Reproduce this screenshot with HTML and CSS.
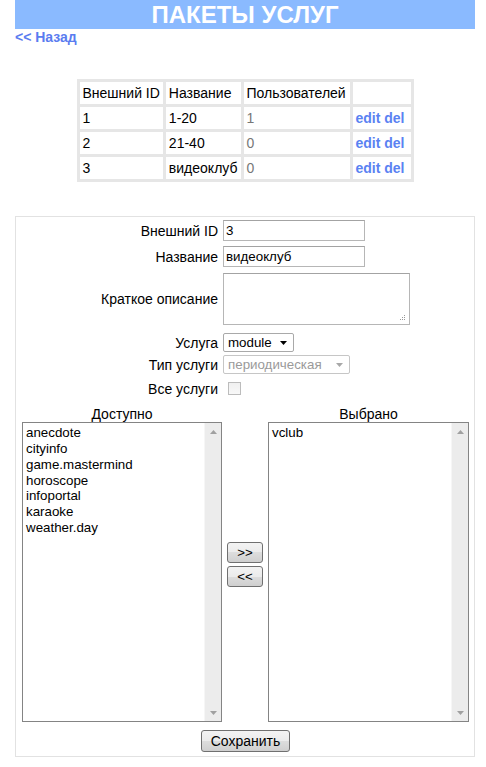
FILE: index.html
```html
<!DOCTYPE html>
<html lang="ru">
<head>
<meta charset="utf-8">
<title>Пакеты услуг</title>
<link rel="stylesheet" href="styles.css">
</head>
<body>
<div class="page">
  <h1 class="title">ПАКЕТЫ УСЛУГ</h1>
  <a class="back" href="#">&lt;&lt; Назад</a>

  <table class="packages">
    <thead>
      <tr><th class="c-id">Внешний ID</th><th class="c-name">Название</th><th class="c-users">Пользователей</th><th class="c-act"></th></tr>
    </thead>
    <tbody>
      <tr><td>1</td><td>1-20</td><td class="num">1</td><td class="act"><a href="#">edit</a> <a href="#">del</a></td></tr>
      <tr><td>2</td><td>21-40</td><td class="num">0</td><td class="act"><a href="#">edit</a> <a href="#">del</a></td></tr>
      <tr><td>3</td><td>видеоклуб</td><td class="num">0</td><td class="act"><a href="#">edit</a> <a href="#">del</a></td></tr>
    </tbody>
  </table>

  <form class="form-box" onsubmit="return false">
    <div class="row r-id">
      <label class="lbl" for="ext">Внешний ID</label>
      <input class="text" id="ext" type="text" value="3">
    </div>
    <div class="row r-name">
      <label class="lbl" for="nm">Название</label>
      <input class="text" id="nm" type="text" value="видеоклуб">
    </div>
    <div class="row r-desc">
      <label class="lbl" for="ds">Краткое описание</label>
      <div class="area-wrap">
        <textarea class="area" id="ds"></textarea>
        <svg class="grip" width="6" height="6" viewBox="0 0 6 6"><rect x="4" y="0" width="1" height="1" fill="#9a9a9a"/><rect x="2" y="2" width="1" height="1" fill="#9a9a9a"/><rect x="4" y="2" width="1" height="1" fill="#9a9a9a"/><rect x="0" y="4" width="1" height="1" fill="#9a9a9a"/><rect x="2" y="4" width="1" height="1" fill="#9a9a9a"/><rect x="4" y="4" width="1" height="1" fill="#9a9a9a"/></svg>
      </div>
    </div>
    <div class="row r-svc">
      <span class="lbl">Услуга</span>
      <div class="select sel-module"><span>module</span><svg width="7" height="4" viewBox="0 0 7 4"><path d="M0 0H7L3.5 4Z" fill="#000"/></svg></div>
    </div>
    <div class="row r-type">
      <span class="lbl">Тип услуги</span>
      <div class="select sel-type disabled"><span>периодическая</span><svg width="7" height="4" viewBox="0 0 7 4"><path d="M0 0H7L3.5 4Z" fill="#a8a8a8"/></svg></div>
    </div>
    <div class="row r-check">
      <span class="lbl">Все услуги</span>
      <span class="check"></span>
    </div>

    <div class="lists-head">
      <span>Доступно</span><span></span><span>Выбрано</span>
    </div>
    <div class="lists">
      <div class="listbox">
        <div class="options">
          <div>anecdote</div>
          <div>cityinfo</div>
          <div>game.mastermind</div>
          <div>horoscope</div>
          <div>infoportal</div>
          <div>karaoke</div>
          <div>weather.day</div>
        </div>
        <div class="scrollbar">
          <span class="sb-btn"><svg width="7" height="4" viewBox="0 0 7 4"><path d="M0 4H7L3.5 0Z" fill="#a0a0a0"/></svg></span>
          <span class="sb-btn"><svg width="7" height="4" viewBox="0 0 7 4"><path d="M0 0H7L3.5 4Z" fill="#a0a0a0"/></svg></span>
        </div>
      </div>
      <div class="movers">
        <button class="btn mv" type="button">&gt;&gt;</button>
        <button class="btn mv" type="button">&lt;&lt;</button>
      </div>
      <div class="listbox">
        <div class="options">
          <div>vclub</div>
        </div>
        <div class="scrollbar">
          <span class="sb-btn"><svg width="7" height="4" viewBox="0 0 7 4"><path d="M0 4H7L3.5 0Z" fill="#a0a0a0"/></svg></span>
          <span class="sb-btn"><svg width="7" height="4" viewBox="0 0 7 4"><path d="M0 0H7L3.5 4Z" fill="#a0a0a0"/></svg></span>
        </div>
      </div>
    </div>
    <div class="save-row">
      <button class="btn save" type="submit">Сохранить</button>
    </div>
  </form>
</div>
</body>
</html>
```

FILE: styles.css
```css
* { box-sizing: border-box; }

body {
  margin: 0;
  font-family: "Liberation Sans", Arial, sans-serif;
  font-size: 14px;
  color: #000;
  background: #fff;
}

.page {
  width: 460px;
  margin-left: 15px;
}

.title {
  margin: 0;
  height: 29px;
  line-height: 30px;
  background: #8abaff;
  color: #fff;
  font-size: 24px;
  font-weight: bold;
  text-align: center;
}

.back {
  display: block;
  width: max-content;
  font-weight: bold;
  font-size: 14px;
  line-height: 17px;
  color: #5a7cf0;
  text-decoration: none;
}

/* table */
.packages {
  margin: 33px auto 0;
  border-collapse: collapse;
  border: 3px solid #e6e6e6;
}
.packages th,
.packages td {
  box-sizing: content-box;
  border: 3px solid #e6e6e6;
  padding: 2px 3px;
  height: 18px;
  line-height: 18px;
  font-weight: normal;
  font-size: 14px;
  text-align: left;
  white-space: nowrap;
}
.packages .c-id { width: 76px; }
.packages .c-name { width: 66px; }
.packages .c-users { width: 100px; }
.packages .c-act { width: 52px; }
.packages .num { color: #777; }
.packages .act a {
  color: #5a82f2;
  font-weight: bold;
  text-decoration: none;
}

/* form */
.form-box {
  margin: 34px 0 0;
  border: 1px solid #e2e2e2;
  padding: 3px 5px 4px 6px;
}

.row {
  display: grid;
  grid-template-columns: 196px 1fr;
  column-gap: 5px;
  align-items: center;
}
.row > :last-child { justify-self: start; }
.lbl { text-align: right; line-height: 16px; }

.r-name { margin-top: 5px; }
.r-desc { margin-top: 6px; }
.r-svc { margin-top: 8px; }
.r-type { margin-top: 3px; }
.r-check { margin-top: 4px; height: 21px; }

.text {
  display: block;
  width: 142px;
  height: 21px;
  margin: 0;
  border: 1px solid #b6b6b6;
  border-top-color: #a3a3a3;
  padding: 0 2px;
  font-family: "Liberation Sans", Arial, sans-serif;
  font-size: 13.33px;
  color: #000;
  outline: none;
}

.area-wrap {
  position: relative;
  width: 187px;
  height: 52px;
}
.area {
  display: block;
  width: 187px;
  height: 52px;
  margin: 0;
  border: 1px solid #b6b6b6;
  border-top-color: #a3a3a3;
  resize: none;
  font-family: "Liberation Sans", Arial, sans-serif;
  font-size: 13.33px;
  outline: none;
}
.grip {
  position: absolute;
  right: 4px;
  bottom: 4px;
}

.select {
  display: flex;
  align-items: center;
  justify-content: space-between;
  height: 19px;
  border: 1px solid #a9a9a9;
  border-radius: 2px;
  padding: 0 6px 0 4px;
  font-size: 13.33px;
  background: #fff;
}
.sel-module { width: 71px; }
.sel-type { width: 127px; }
.select.disabled {
  color: #9a9a9a;
  border-color: #c6c6c6;
}

.check {
  display: block;
  width: 13px;
  height: 13px;
  margin-left: 5px;
  border: 1px solid #bcbcbc;
  background: linear-gradient(#f0f0f0, #f8f8f8);
}

.lists-head {
  display: grid;
  grid-template-columns: 200px 46px 201px;
  margin-top: 7px;
  line-height: 16px;
  text-align: center;
}

.lists {
  display: grid;
  grid-template-columns: 200px 46px 201px;
  height: 300px;
}

.listbox {
  display: flex;
  border: 1px solid #848484;
  background: #fff;
}
.options {
  flex: 1;
  padding: 2px 3px;
  font-size: 13.33px;
  line-height: 15.85px;
}
.scrollbar {
  width: 17px;
  display: flex;
  flex-direction: column;
  justify-content: space-between;
  background: #ececec;
  border-left: 1px solid #f6f6f6;
}
.sb-btn {
  height: 17px;
  display: flex;
  align-items: center;
  justify-content: center;
}

.movers {
  display: flex;
  flex-direction: column;
  align-items: center;
  justify-content: center;
  gap: 3px;
  padding-bottom: 16px;
}

.btn {
  margin: 0;
  padding: 0;
  border: 1px solid #707070;
  border-radius: 3px;
  background: linear-gradient(#f3f3f3 0%, #ebebeb 50%, #dddddd 50%, #cfcfcf 100%);
  font-family: "Liberation Sans", Arial, sans-serif;
  font-size: 13.33px;
  color: #000;
}
.mv {
  width: 36px;
  height: 21px;
}

.save-row {
  display: flex;
  justify-content: center;
  margin-top: 8px;
}
.save {
  width: 89px;
  height: 22px;
  font-size: 14px;
}
```
